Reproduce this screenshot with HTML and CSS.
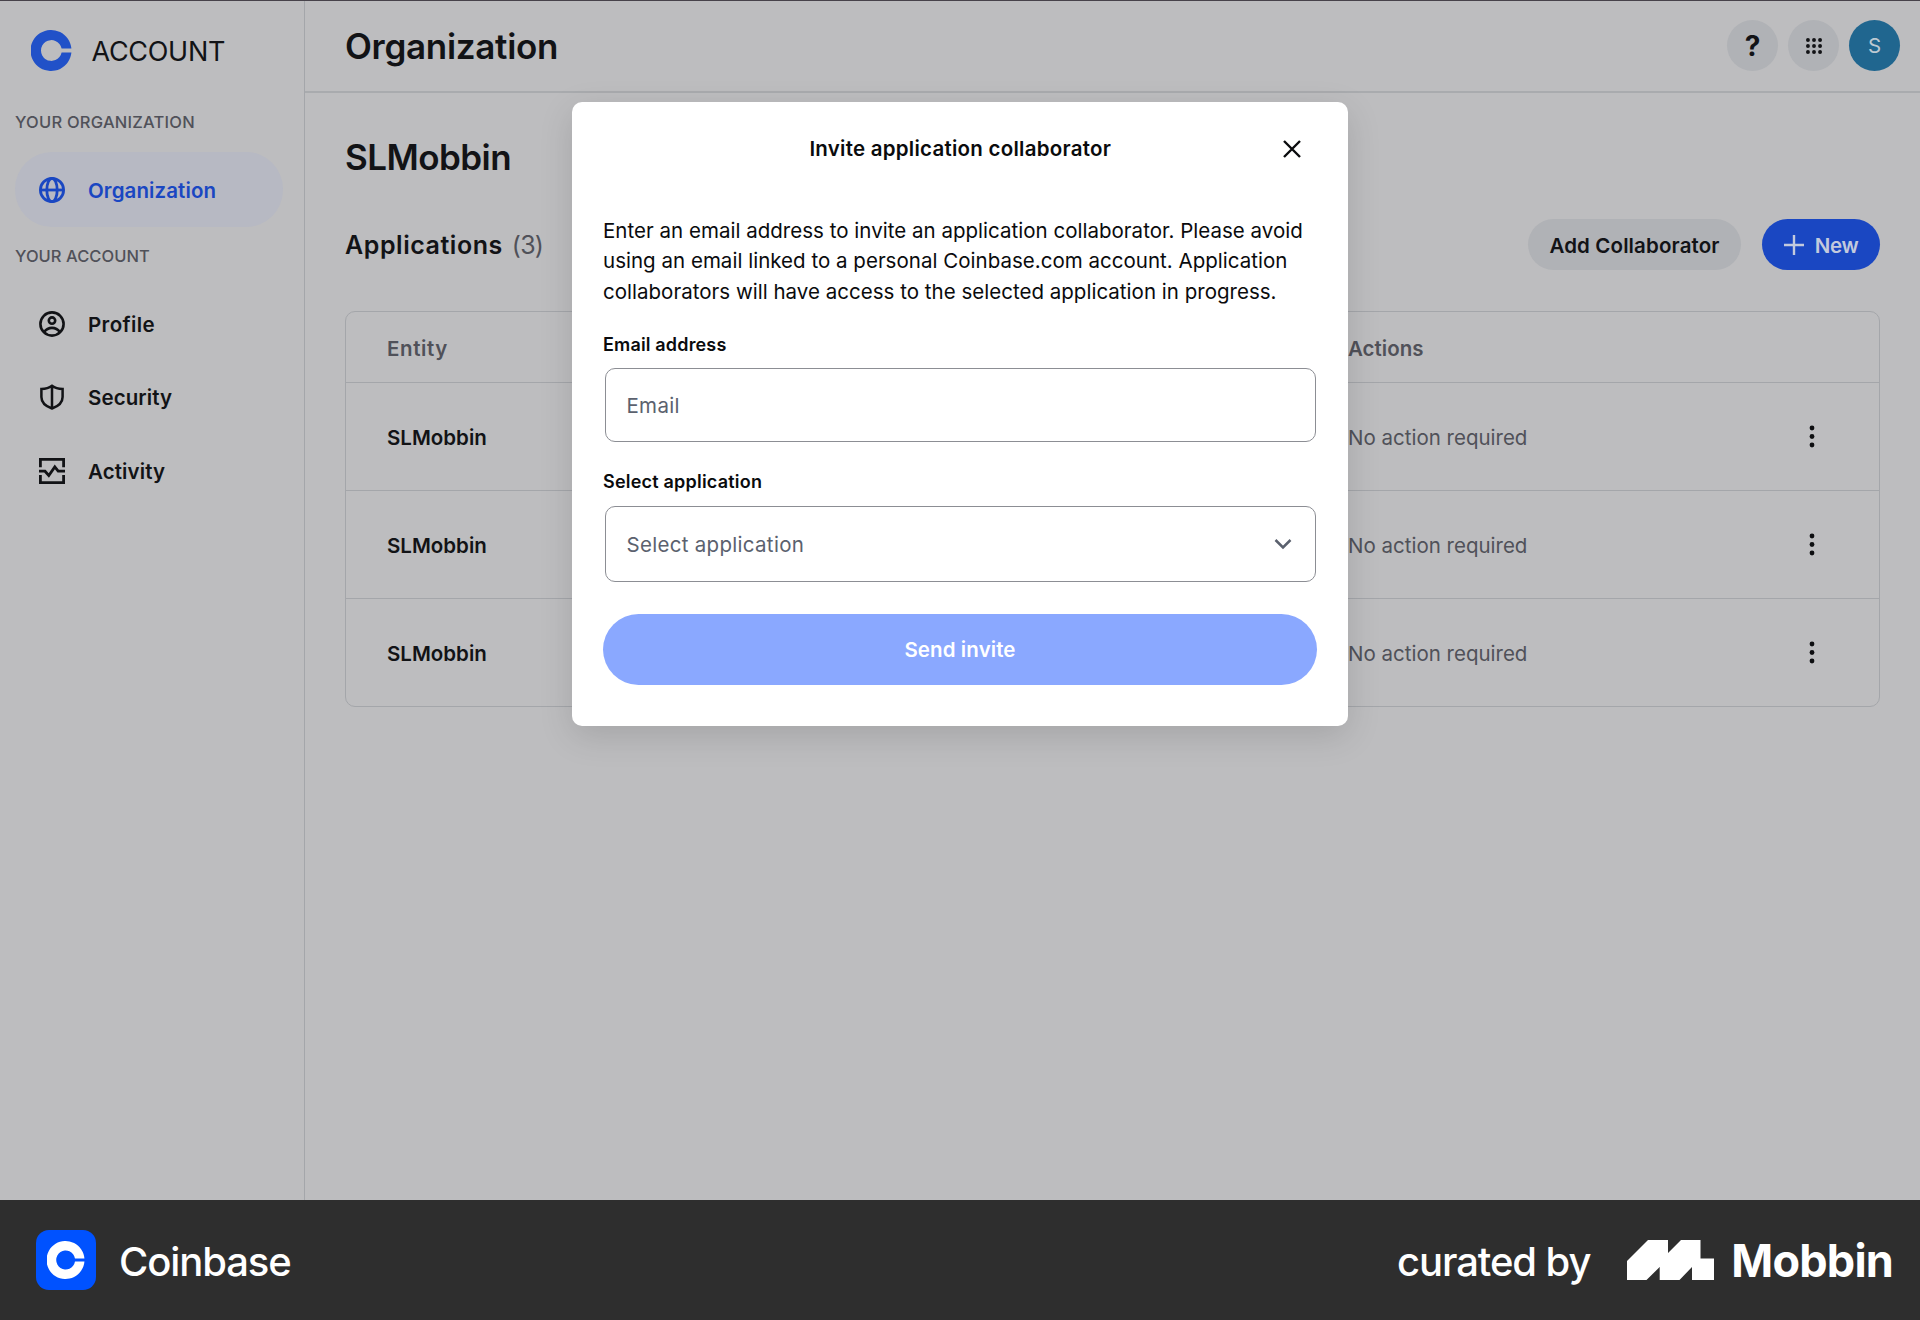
FILE: index.html
```
<!DOCTYPE html>
<html lang="en">
<head>
<meta charset="utf-8">
<title>Organization</title>
<link rel="stylesheet" href="styles.css">
</head>
<body>
<div class="app">
  <aside class="sidebar">
    <div class="brand">
      <svg class="brand-logo" viewBox="0 0 41 41"><path d="M40.400 22.500A20.500 20.500 0 1 1 40.400 18.500H30.600A10.400 10.400 0 1 0 30.600 22.500Z" fill="currentColor"/></svg>
      <span class="brand-name">ACCOUNT</span>
    </div>
    <h2 class="nav-heading nav-heading-first">YOUR ORGANIZATION</h2>
    <a class="nav-item nav-item-active">
      <svg class="nav-icon" viewBox="0 0 26 26" fill="none" stroke="currentColor" stroke-width="2.800"><circle cx="13" cy="13" r="11.600"/><ellipse cx="13" cy="13" rx="5.200" ry="11.600"/><path d="M1.400 13h23.200"/></svg>
      <span>Organization</span>
    </a>
    <h2 class="nav-heading">YOUR ACCOUNT</h2>
    <a class="nav-item">
      <svg class="nav-icon" viewBox="0 0 26 26" fill="none" stroke="currentColor" stroke-width="2.600"><circle cx="13" cy="13" r="11.600"/><circle cx="13" cy="9.600" r="3.200"/><path d="M5 21.200c2.200-3 5-4.300 8-4.300s5.800 1.300 8 4.300"/></svg>
      <span class="profile">Profile</span>
    </a>
    <a class="nav-item">
      <svg class="nav-icon" viewBox="0 0 26 26" fill="none" stroke="currentColor" stroke-width="2.500"><path d="M13 1.700c3 2.200 6.600 3.100 10.600 3.200V13c0 5.300-4.300 9.300-10.600 11.500C6.700 22.300 2.400 18.300 2.400 13V4.900C6.400 4.800 10 3.900 13 1.700ZM13 2v22"/></svg>
      <span>Security</span>
    </a>
    <a class="nav-item">
      <svg class="nav-icon" viewBox="0 0 26 26" fill="none" stroke="currentColor" stroke-width="2.800"><path d="M1.400 9.300V1.400h23.200v7.900M1.400 17v7.600h23.200V17M0 13.200h6l3.800 4.300 6-8.600 3.400 4.300H26"/></svg>
      <span>Activity</span>
    </a>
  </aside>

  <main class="main">
    <header class="topbar">
      <h1 class="page-title">Organization</h1>
      <div class="topbar-actions">
        <button class="circle help">?</button>
        <button class="circle">
          <svg class="grid-icon" viewBox="0 0 18 18" fill="currentColor"><circle cx="2.200" cy="2.200" r="2.200"/><circle cx="9" cy="2.200" r="2.200"/><circle cx="15.800" cy="2.200" r="2.200"/><circle cx="2.200" cy="9" r="2.200"/><circle cx="9" cy="9" r="2.200"/><circle cx="15.800" cy="9" r="2.200"/><circle cx="2.200" cy="15.800" r="2.200"/><circle cx="9" cy="15.800" r="2.200"/><circle cx="15.800" cy="15.800" r="2.200"/></svg>
        </button>
        <button class="circle avatar">S</button>
      </div>
    </header>

    <section class="content">
      <h2 class="org-name">SLMobbin</h2>
      <div class="toolbar">
        <h3 class="list-title">Applications</h3>
        <span class="list-count">(3)</span>
        <button class="button button-secondary">Add Collaborator</button>
        <button class="button button-primary">
          <svg class="plus-icon" viewBox="0 0 20 20" fill="none" stroke="currentColor" stroke-width="2.400"><path d="M10 0v20M0 10h20"/></svg>
          <span>New</span>
        </button>
      </div>
      <div class="table">
        <div class="row row-head"><span class="entity-head">Entity</span><span>Actions</span></div>
        <div class="row"><strong class="entity">SLMobbin</strong><span>No action required</span><svg class="kebab" viewBox="0 0 6 24" fill="currentColor"><circle cx="3" cy="3" r="2.400"/><circle cx="3" cy="11.500" r="2.400"/><circle cx="3" cy="20" r="2.400"/></svg></div>
        <div class="row"><strong class="entity">SLMobbin</strong><span>No action required</span><svg class="kebab" viewBox="0 0 6 24" fill="currentColor"><circle cx="3" cy="3" r="2.400"/><circle cx="3" cy="11.500" r="2.400"/><circle cx="3" cy="20" r="2.400"/></svg></div>
        <div class="row"><strong class="entity">SLMobbin</strong><span>No action required</span><svg class="kebab" viewBox="0 0 6 24" fill="currentColor"><circle cx="3" cy="3" r="2.400"/><circle cx="3" cy="11.500" r="2.400"/><circle cx="3" cy="20" r="2.400"/></svg></div>
      </div>
    </section>
  </main>

  <div class="modal" role="dialog">
    <div class="modal-header">
      <h2 class="modal-title">Invite application collaborator</h2>
      <svg class="close-icon" viewBox="0 0 18 18" fill="none" stroke="currentColor" stroke-width="2.400"><path d="M1 1l16 16M17 1L1 17"/></svg>
    </div>
    <p class="modal-text">Enter an email address to invite an application collaborator. Please avoid<br>using an email linked to a personal Coinbase.com account. Application<br>collaborators will have access to the selected application in progress.</p>
    <label class="field-label">Email address</label>
    <div class="field">Email</div>
    <label class="field-label select-label">Select application</label>
    <div class="field select"><span>Select application</span>
      <svg class="chevron" viewBox="0 0 18 12" fill="none" stroke="currentColor" stroke-width="2.500"><path d="M1.500 2L9 9.500 16.500 2"/></svg>
    </div>
    <button class="submit">Send invite</button>
  </div>
</div>

<footer class="footer">
  <div class="app-icon"><svg class="app-glyph" viewBox="0 0 41 41"><path d="M40.400 22.200A20.500 20.500 0 1 1 40.400 18.800H30.200A10.200 10.200 0 1 0 30.200 22.200Z" fill="currentColor"/></svg></div>
  <span class="app-name">Coinbase</span>
  <span class="curated">curated by</span>
  <svg class="mobbin-mark" viewBox="0 0 87 40"><path d="M0 21L21 0H41V13L54 0H73.500V18.500H87V40H65V27L52.500 40H32.700V27L19.500 40H0Z" fill="currentColor"/></svg>
  <span class="mobbin-name">Mobbin</span>
</footer>
</body>
</html>
```
FILE: styles.css
```
* { box-sizing: border-box; }
body { margin: 0; width: 1920px; height: 1320px; overflow: hidden; font-family: Inter, "Liberation Sans", sans-serif; font-size: 20.5px; color: #121316; background: #bdbdbf; }
h1, h2, h3, p { margin: 0; }
button { border: 0; padding: 0; font: inherit; letter-spacing: inherit; color: inherit; }
svg { display: block; flex: none; }

.app { position: relative; display: flex; height: 1200px; border-top: 1px solid #47424a; }

.sidebar { width: 305px; border-right: 1px solid #a4a6aa; padding: 29px 21px 0 15px; }
.brand { display: flex; align-items: center; height: 41px; padding-left: 15.5px; }
.brand-logo { width: 41px; height: 41px; color: #2151c8; }
.brand-name { margin-left: 20px; padding-top: 1px; font-size: 27px; letter-spacing: -.3px; }
.nav-heading { height: 14px; margin: 22px 0 24px; font-size: 16.5px; line-height: 14px; font-weight: 500; letter-spacing: .04px; color: #505159; white-space: nowrap; }
.nav-heading-first { margin: 44px 0 23px; letter-spacing: .23px; }
.nav-item { display: flex; align-items: center; height: 73.6px; padding-left: 24px; border-radius: 37px; font-weight: 600; letter-spacing: .1px; }
.nav-item-active { height: 75px; background: #b7b9c3; color: #1a47c2; }
.nav-icon { width: 26px; height: 26px; margin-right: 23px; }
.nav-item span { padding-top: 1px; }
.profile { letter-spacing: .4px; }

.main { flex: 1; }
.topbar { display: flex; align-items: center; justify-content: space-between; height: 92px; padding: 0 20px 0 40px; border-bottom: 2px solid #a9abae; }
.page-title { font-size: 35px; font-weight: 600; letter-spacing: -.3px; }
.topbar-actions { display: flex; gap: 10px; padding-bottom: 1px; }
.circle { display: flex; align-items: center; justify-content: center; width: 51px; height: 51px; border-radius: 50%; background: #b0b2b6; }
.help { font-size: 28px; font-weight: 700; }
.avatar { background: #20668f; color: #bdc9d2; }
.grid-icon { width: 16px; height: 16px; }

.content { padding: 42px 40px 0; }
.org-name { font-size: 35px; line-height: 44px; font-weight: 600; letter-spacing: -.55px; }
.toolbar { display: flex; align-items: center; height: 51px; margin: 40px 0 41px; }
.list-title { padding-top: 1px; font-size: 25px; font-weight: 600; letter-spacing: .55px; }
.list-count { margin-left: 9px; margin-right: auto; padding-top: 1px; font-size: 25px; letter-spacing: -.8px; color: #505159; }
.button { display: flex; align-items: center; justify-content: center; height: 51px; padding-top: 1px; border-radius: 26px; font-weight: 600; letter-spacing: .13px; }
.button-secondary { width: 213px; margin-right: 21px; background: #b0b2b6; }
.button-primary { width: 118px; gap: 11px; background: #1a47c2; color: #c3cadd; letter-spacing: -.3px; }
.plus-icon { width: 20px; height: 20px; }

.table { border: 1px solid #a4a6aa; border-radius: 10px; }
.row { display: grid; grid-template-columns: 961px 1fr 6px; align-items: center; height: 108px; padding: 1px 64px 0 41px; color: #505159; }
.row + .row { border-top: 1px solid #a4a6aa; }
.row-head { height: 70px; padding-top: 3px; font-weight: 600; }
.entity-head { letter-spacing: .6px; }
.entity { font-weight: 600; letter-spacing: 0; color: #121316; }
.kebab { width: 6px; height: 24px; color: #0d0e10; }

.modal { position: absolute; left: 572px; top: 101px; width: 776px; height: 624px; padding: 0 31px; border-radius: 10px; background: #fff; color: #0a0b0d; box-shadow: 0 10px 34px rgba(0, 0, 0, .13); }
.modal-header { display: flex; align-items: center; justify-content: flex-end; height: 93px; padding-right: 16.5px; }
.modal-title { flex: 1; padding-left: 35px; text-align: center; font-size: 20.5px; font-weight: 600; letter-spacing: .25px; }
.close-icon { width: 18px; height: 18px; }
.modal-text { margin-top: 20.5px; line-height: 30.6px; letter-spacing: .02px; white-space: nowrap; }
.field-label { display: block; margin: 28.7px 0 14px; font-size: 18px; line-height: 18px; font-weight: 600; letter-spacing: .16px; }
.select-label { margin: 31px 0 15px; letter-spacing: .21px; }
.field { display: flex; align-items: center; justify-content: space-between; height: 74px; margin: 0 1.5px; padding: 1px 23px 0 21px; border: 1px solid #8c8e94; border-radius: 10px; letter-spacing: .3px; color: #5b616e; }
.select { height: 76px; }
.chevron { width: 18px; height: 12px; }
.submit { width: 714px; height: 71px; margin-top: 32px; border-radius: 36px; background: #8aa8ff; color: #fff; font-weight: 600; letter-spacing: .1px; }

.footer { display: flex; align-items: center; height: 120px; padding: 0 27px 0 36px; background: #2e2e2e; color: #fff; }
.app-icon { display: flex; align-items: center; justify-content: center; width: 60px; height: 60px; border-radius: 13px; background: #0052ff; }
.app-glyph { width: 38px; height: 38px; }
.app-name { margin-left: 23px; margin-right: auto; padding-top: 3px; font-size: 40px; font-weight: 500; letter-spacing: -1.1px; }
.curated { padding-top: 3px; font-size: 40px; font-weight: 500; letter-spacing: -1.1px; }
.mobbin-mark { width: 87px; height: 40px; margin: 0 17px 0 37px; }
.mobbin-name { font-size: 45px; font-weight: 700; letter-spacing: -.8px; }
```
